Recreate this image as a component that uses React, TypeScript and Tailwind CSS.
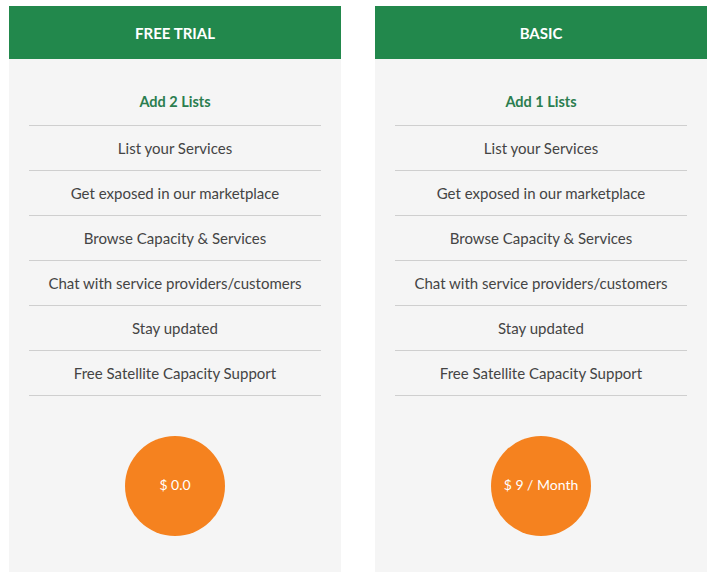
const features = [
  'List your Services',
  'Get exposed in our marketplace',
  'Browse Capacity & Services',
  'Chat with service providers/customers',
  'Stay updated',
  'Free Satellite Capacity Support',
]

const plans = [
  { name: 'FREE TRIAL', lists: 'Add 2 Lists', price: '$ 0.0' },
  { name: 'BASIC', lists: 'Add 1 Lists', price: '$ 9 / Month' },
]

function PlanCard({ plan }: { plan: (typeof plans)[number] }) {
  return (
    <div className="w-[332px] bg-[#f5f5f5]">
      <div className="flex h-[53px] items-center justify-center bg-[#22884c] pt-px text-[15px] font-bold text-white">
        {plan.name}
      </div>
      <div className="px-[20px] pt-[22px]">
        <div className="flex h-[45px] items-center justify-center border-b border-[#cfcfcf] pb-[3px] text-[14.5px] font-bold text-[#2b7d4f]">
          {plan.lists}
        </div>
        {features.map((f) => (
          <div
            key={f}
            className="flex h-[45px] items-center justify-center border-b border-[#cfcfcf] text-[15px] text-[#444]"
          >
            {f}
          </div>
        ))}
      </div>
      <div className="flex justify-center pt-[40px] pb-[36px]">
        <div className="flex h-[100px] w-[100px] items-center justify-center rounded-full bg-[#f5821f] pb-[3px] text-[14px] text-white">
          {plan.price}
        </div>
      </div>
    </div>
  )
}

export default function App() {
  return (
    <div
      className="flex h-[580px] w-[715px] items-start gap-[34px] bg-white pl-[9px] pt-[6px]"
      style={{ fontFamily: 'Lato, "Liberation Sans", sans-serif' }}
    >
      {plans.map((p) => (
        <PlanCard key={p.name} plan={p} />
      ))}
    </div>
  )
}
